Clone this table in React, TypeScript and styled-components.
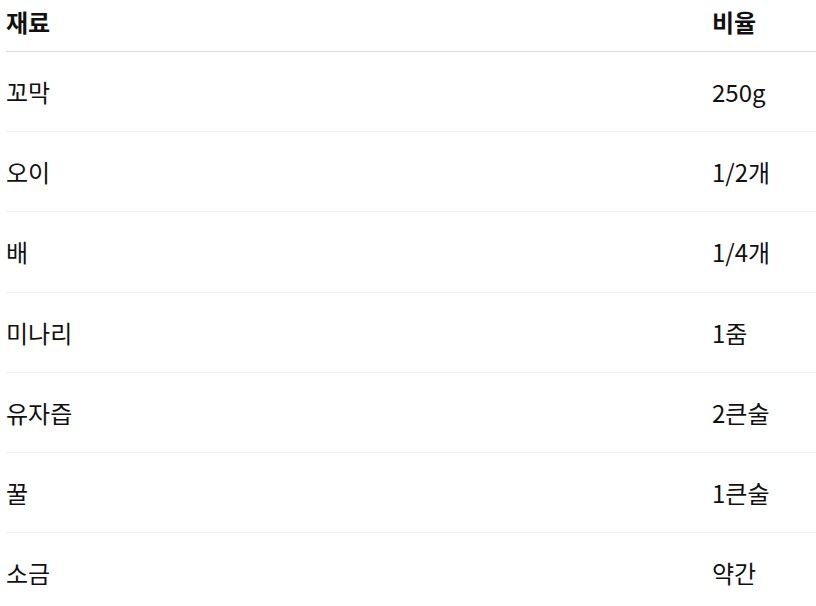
import styled, { createGlobalStyle } from 'styled-components';

type Ingredient = { name: string; amount: string };

const ingredients: Ingredient[] = [
  { name: '꼬막', amount: '250g' },
  { name: '오이', amount: '1/2개' },
  { name: '배', amount: '1/4개' },
  { name: '미나리', amount: '1줌' },
  { name: '유자즙', amount: '2큰술' },
  { name: '꿀', amount: '1큰술' },
  { name: '소금', amount: '약간' },
];

const GlobalStyle = createGlobalStyle`
  html, body {
    margin: 0;
    padding: 0;
    background: #fff;
  }
  body {
    font-family: "Noto Sans CJK KR", "Noto Sans", sans-serif;
    color: #111;
  }
`;

export default function App() {
  return (
    <>
      <GlobalStyle />
      <Page>
        <Table>
          <HeadRow>
            <HeadCell>재료</HeadCell>
            <HeadCell>비율</HeadCell>
          </HeadRow>
          {ingredients.map(({ name, amount }, i) => (
            <Row key={name} $last={i === ingredients.length - 1}>
              <Cell>{name}</Cell>
              <Cell>{amount}</Cell>
            </Row>
          ))}
        </Table>
      </Page>
    </>
  );
}

const Page = styled.div`
  padding-left: 6px;
  width: 810px;
`;

const Table = styled.div`
  display: flex;
  flex-direction: column;
`;

const HeadRow = styled.div`
  display: grid;
  grid-template-columns: 1fr 104px;
  align-items: center;
  height: 52px;
  padding-bottom: 7px;
  box-sizing: border-box;
  border-bottom: 1px solid #dcdcdc;
`;

const Row = styled.div<{ $last?: boolean }>`
  display: grid;
  grid-template-columns: 1fr 104px;
  align-items: center;
  height: 80.2px;
  padding-top: 1px;
  box-sizing: border-box;
  border-bottom: 1px solid ${(p) => (p.$last ? 'transparent' : '#f0f0f0')};
`;

const HeadCell = styled.div`
  font-size: 24px;
  font-weight: 700;
  line-height: 1;
`;

const Cell = styled.div`
  font-size: 24px;
  line-height: 1;
`;
